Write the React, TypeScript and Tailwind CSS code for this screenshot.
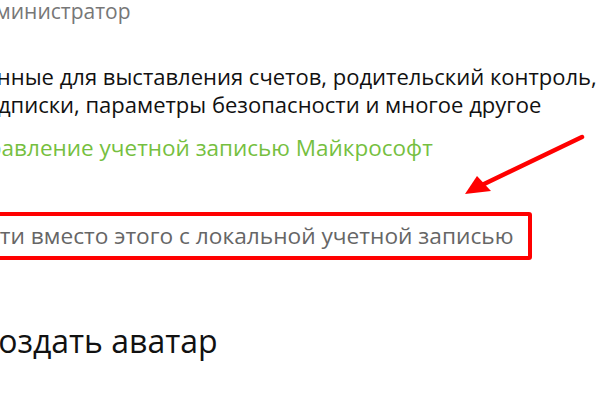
import React from 'react';

const RedArrow = () => (
  <svg
    className="absolute left-0 top-0 pointer-events-none"
    width="600"
    height="400"
    viewBox="0 0 600 400"
  >
    <line x1="582" y1="137" x2="482" y2="185" stroke="#ff0000" strokeWidth="4.5" strokeLinecap="round" />
    <polygon points="465,194 477,176 491,191" fill="#ff0000" />
  </svg>
);

export default function App() {
  return (
    <div className="relative w-[600px] h-[400px] overflow-hidden bg-white font-['Open_Sans',sans-serif]">
      <div className="flex flex-col whitespace-nowrap">
        {/* account type */}
        <div className="-mt-[3px] ml-[-30px] text-[21px] leading-[28px] text-[#777777]">Администратор</div>

        {/* description */}
        <div className="mt-[37px] text-[22px] leading-[28px] text-[#111111]">
          <div className="ml-[-28px]">данные для выставления счетов, родительский контроль,</div>
          <div className="ml-[-29px]">подписки, параметры безопасности и многое другое</div>
        </div>

        {/* link */}
        <div className="mt-[16px] ml-[-40px] text-[22.5px] leading-[28px] text-[#76bf3f]">
          Управление учетной записью Майкрософт
        </div>

        {/* local account option, framed */}
        <div className="mt-[50px] ml-[-51px] w-[583px] h-[48px] border-4 border-[#ff0000] rounded-[3px] pt-[6px] pl-[4px] text-[22.7px] leading-[28px] text-[#666666]">
          Войти вместо этого с локальной учетной записью
        </div>

        {/* avatar heading */}
        <div className="mt-[61px] ml-[-22px] text-[32px] leading-[40px] text-[#111111]">Создать аватар</div>
      </div>

      <RedArrow />
    </div>
  );
}
